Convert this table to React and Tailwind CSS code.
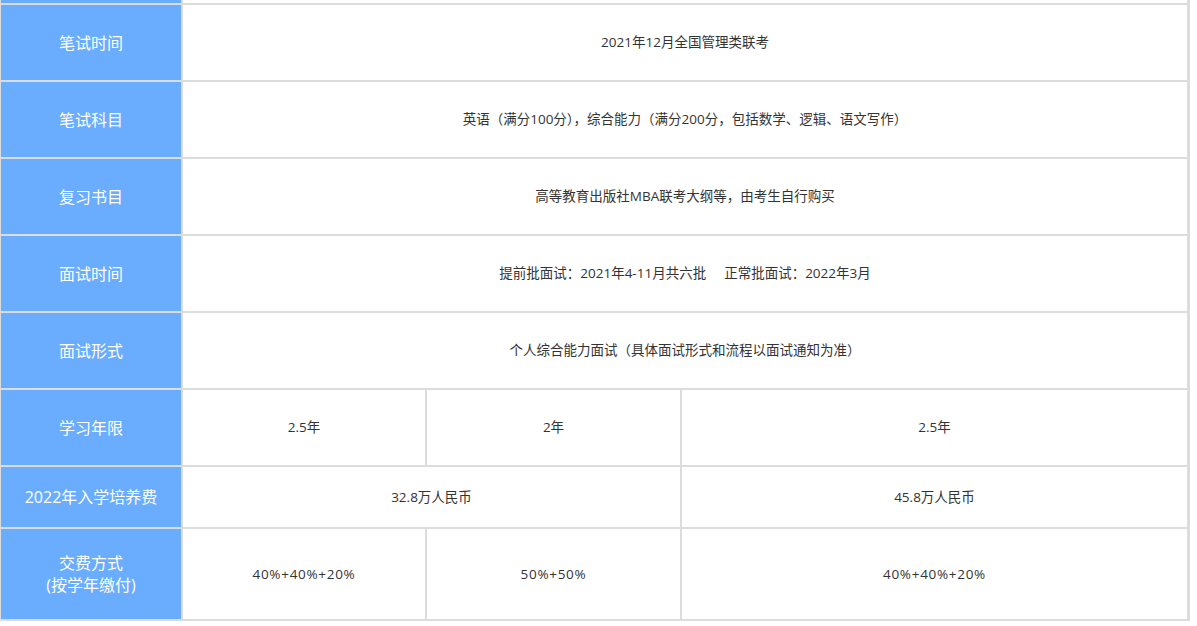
import React from 'react';

// MBA exam info table
const FONT = { fontFamily: '"Open Sans", "Noto Sans CJK SC", sans-serif' };

const Head = ({ children }) => (
  <div className="bg-[#6aacfe] text-white text-[16px] flex items-center justify-center text-center leading-[22px]">
    {children}
  </div>
);

const Cell = ({ children, span = '' }) => (
  <div className={`bg-white text-[#333] text-[13.5px] flex items-center justify-center text-center ${span}`}>
    {children}
  </div>
);

export default function App() {
  return (
    <div className="w-[1197px] h-[626px] bg-white overflow-hidden" style={FONT}>
      <div
        className="w-[1190px] bg-[#dcdcdc] pl-[1px] pr-[3px] pb-[2px] grid gap-[2px]"
        style={{
          gridTemplateColumns: '180px 242px 253px 505px',
          gridTemplateRows: '3px 75px 75px 75px 75px 75px 75px 60px 90px',
        }}
      >
        {/* cut-off row above */}
        <div className="bg-[#6aacfe]" />
        <div className="bg-white col-span-3" />

        <Head>笔试时间</Head>
        <Cell span="col-span-3">2021年12月全国管理类联考</Cell>

        <Head>笔试科目</Head>
        <Cell span="col-span-3">英语（满分100分），综合能力（满分200分，包括数学、逻辑、语文写作）</Cell>

        <Head>复习书目</Head>
        <Cell span="col-span-3">高等教育出版社MBA联考大纲等，由考生自行购买</Cell>

        <Head>面试时间</Head>
        <Cell span="col-span-3">
          提前批面试：2021年4-11月共六批<span className="inline-block w-[18px]" />正常批面试：2022年3月
        </Cell>

        <Head>面试形式</Head>
        <Cell span="col-span-3">个人综合能力面试（具体面试形式和流程以面试通知为准）</Cell>

        <Head>学习年限</Head>
        <Cell>2.5年</Cell>
        <Cell>2年</Cell>
        <Cell>2.5年</Cell>

        <Head>2022年入学培养费</Head>
        <Cell span="col-span-2">32.8万人民币</Cell>
        <Cell>45.8万人民币</Cell>

        <Head>
          <div>
            交费方式
            <br />
            (按学年缴付)
          </div>
        </Head>
        <Cell><span className="tracking-[0.7px]">40%+40%+20%</span></Cell>
        <Cell><span className="tracking-[0.7px]">50%+50%</span></Cell>
        <Cell><span className="tracking-[0.7px]">40%+40%+20%</span></Cell>
      </div>
    </div>
  );
}
